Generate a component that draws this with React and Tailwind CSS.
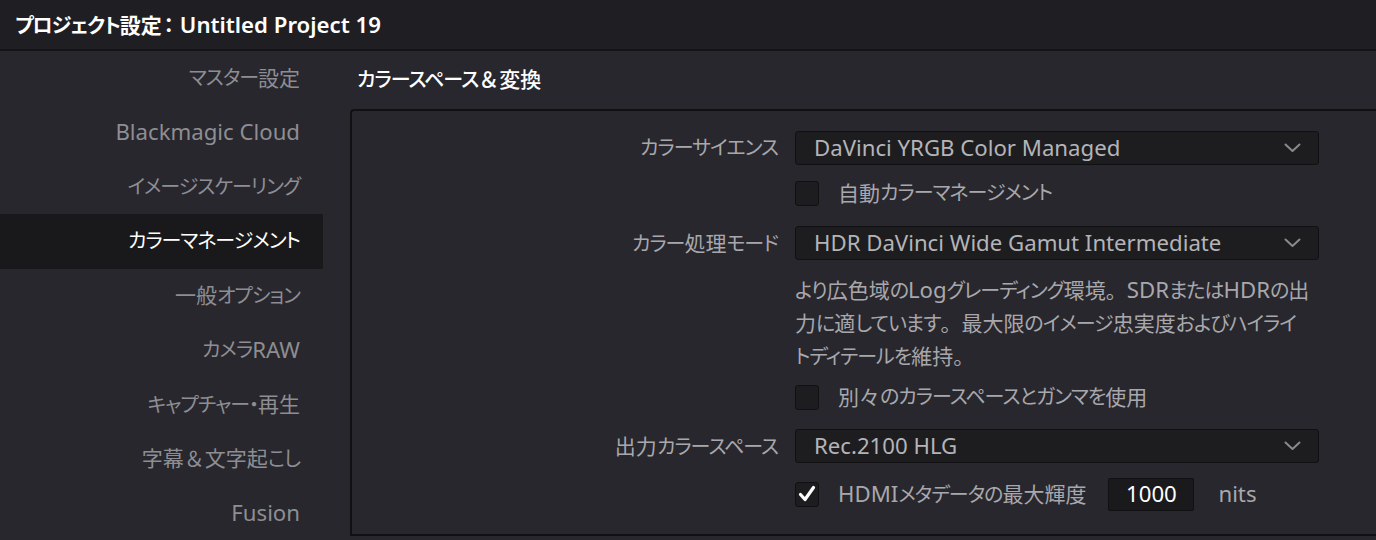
const navItems = [
  "マスター設定",
  "Blackmagic Cloud",
  "イメージスケーリング",
  "カラーマネージメント",
  "一般オプション",
  "カメラRAW",
  "キャプチャー・再生",
  "字幕＆文字起こし",
  "Fusion",
];

const runs = /([\u3000-\u303f\uff00-\uffef\u4e00-\u9fff]+|[\u3040-\u30ff]+)/;
const fullWidth = /^[\u3000-\u303f\uff00-\uffef\u4e00-\u9fff]+$/;
const kana = /^[\u3040-\u30ff]+$/;

// kana proportional, kanji and punctuation full width, Latin a bit larger
function T({ children }) {
  return children.split(runs).map((part, i) => {
    if (!part) return null;
    if (fullWidth.test(part))
      return (
        <span key={i} className="text-[1.05em]">
          {part}
        </span>
      );
    if (kana.test(part))
      return (
        <span key={i} className="tracking-[-0.05em] [font-feature-settings:'palt']">
          {part}
        </span>
      );
    return (
      <span key={i} className="text-[1.11em]">
        {part}
      </span>
    );
  });
}

function Chevron() {
  return (
    <svg width="17" height="10" viewBox="0 0 17 10" fill="none" className="text-[#8a8a8e]">
      <polyline points="1.5,1.5 8.5,8 15.5,1.5" stroke="currentColor" strokeWidth="2" strokeLinecap="round" strokeLinejoin="round" />
    </svg>
  );
}

function Select({ value }) {
  return (
    <div className="flex h-[34px] w-[524px] items-center justify-between rounded-[3px] border border-[#111113] bg-[#1d1d20] pl-[18px] pr-[17px]">
      <span className="text-[20px] leading-none text-[#b4b4b8]">
        <T>{value}</T>
      </span>
      <Chevron />
    </div>
  );
}

function Checkbox({ checked, children }) {
  return (
    <div className="flex h-[34px] items-center gap-[19px]">
      <div className="flex h-[25px] w-[24px] items-center justify-center rounded-[3px] border border-[#111113] bg-[#1d1d20]">
        {checked && (
          <svg width="18" height="18" viewBox="0 0 18 18" fill="none">
            <path d="M2.5 9.5 L7 14.5 L15.5 2.5" stroke="white" strokeWidth="3.2" strokeLinecap="round" strokeLinejoin="round" />
          </svg>
        )}
      </div>
      <div className="flex items-center text-[20px] leading-none text-[#a8a8ac]">{children}</div>
    </div>
  );
}

function Row({ label, children }) {
  return (
    <div className="flex items-center">
      <div className="w-[443px] pr-[17px] text-right text-[20px] leading-none text-[#a8a8ac]">
        <T>{label}</T>
      </div>
      <div>{children}</div>
    </div>
  );
}

export default function App() {
  return (
    <div className="h-[540px] w-[1376px] overflow-hidden bg-[#28272e] font-['Noto_Sans','Noto_Sans_CJK_JP',sans-serif]">
      <div className="flex h-[51px] items-center border-b-2 border-[#141416] bg-[#1f1f23] pl-[15px]">
        <span className="text-[20px] font-semibold text-white">
          <T>プロジェクト設定</T>
          <span className="mr-[6px] ml-[2px] [font-feature-settings:'palt']">：</span>
          <T>Untitled Project 19</T>
        </span>
      </div>
      <div className="flex">
        <div className="w-[323px] shrink-0">
          {navItems.map((item) => (
            <div
              key={item}
              className={
                item === "カラーマネージメント"
                  ? "flex h-[54.4px] items-center justify-end bg-[#19191c] pr-[23px] text-[20px] leading-none text-white"
                  : "flex h-[54.4px] items-center justify-end pr-[23px] text-[20px] leading-none text-[#8e8e92]"
              }
            >
              <T>{item}</T>
            </div>
          ))}
        </div>
        <div className="ml-[27px] flex-1">
          <div className="flex h-[58px] items-center pl-[7px] text-[20px] font-medium text-white">
            <T>カラースペース＆変換</T>
          </div>
          <div className="h-[427px] rounded-tl-[4px] border-2 border-r-0 border-[#111113] bg-[#28272e] pt-[20px]">
            <Row label="カラーサイエンス">
              <Select value="DaVinci YRGB Color Managed" />
            </Row>
            <div className="mt-[11px] pl-[443px]">
              <Checkbox>
                <T>自動カラーマネージメント</T>
              </Checkbox>
            </div>
            <div className="mt-[16px]">
              <Row label="カラー処理モード">
                <Select value="HDR DaVinci Wide Gamut Intermediate" />
              </Row>
            </div>
            <div className="mt-[14px] pl-[443px] text-[20px] leading-[32px] text-[#a8a8ac]">
              <div className="whitespace-nowrap">
                <T>より広色域のLogグレーディング環境。SDRまたはHDRの出</T>
              </div>
              <div className="whitespace-nowrap">
                <T>力に適しています。最大限のイメージ忠実度およびハイライ</T>
              </div>
              <div className="whitespace-nowrap">
                <T>トディテールを維持。</T>
              </div>
            </div>
            <div className="mt-[7px] pl-[443px]">
              <Checkbox>
                <T>別々のカラースペースとガンマを使用</T>
              </Checkbox>
            </div>
            <div className="mt-[15px]">
              <Row label="出力カラースペース">
                <Select value="Rec.2100 HLG" />
              </Row>
            </div>
            <div className="mt-[14px] pl-[443px]">
              <Checkbox checked>
                <span>
                  <T>HDMIメタデータの最大輝度</T>
                </span>
                <div className="ml-[22px] flex h-[33px] w-[86px] items-center justify-center rounded-[2px] border border-[#111113] bg-[#1a1a1d] text-white">
                  <T>1000</T>
                </div>
                <span className="ml-[24px]">
                  <T>nits</T>
                </span>
              </Checkbox>
            </div>
          </div>
        </div>
      </div>
    </div>
  );
}
